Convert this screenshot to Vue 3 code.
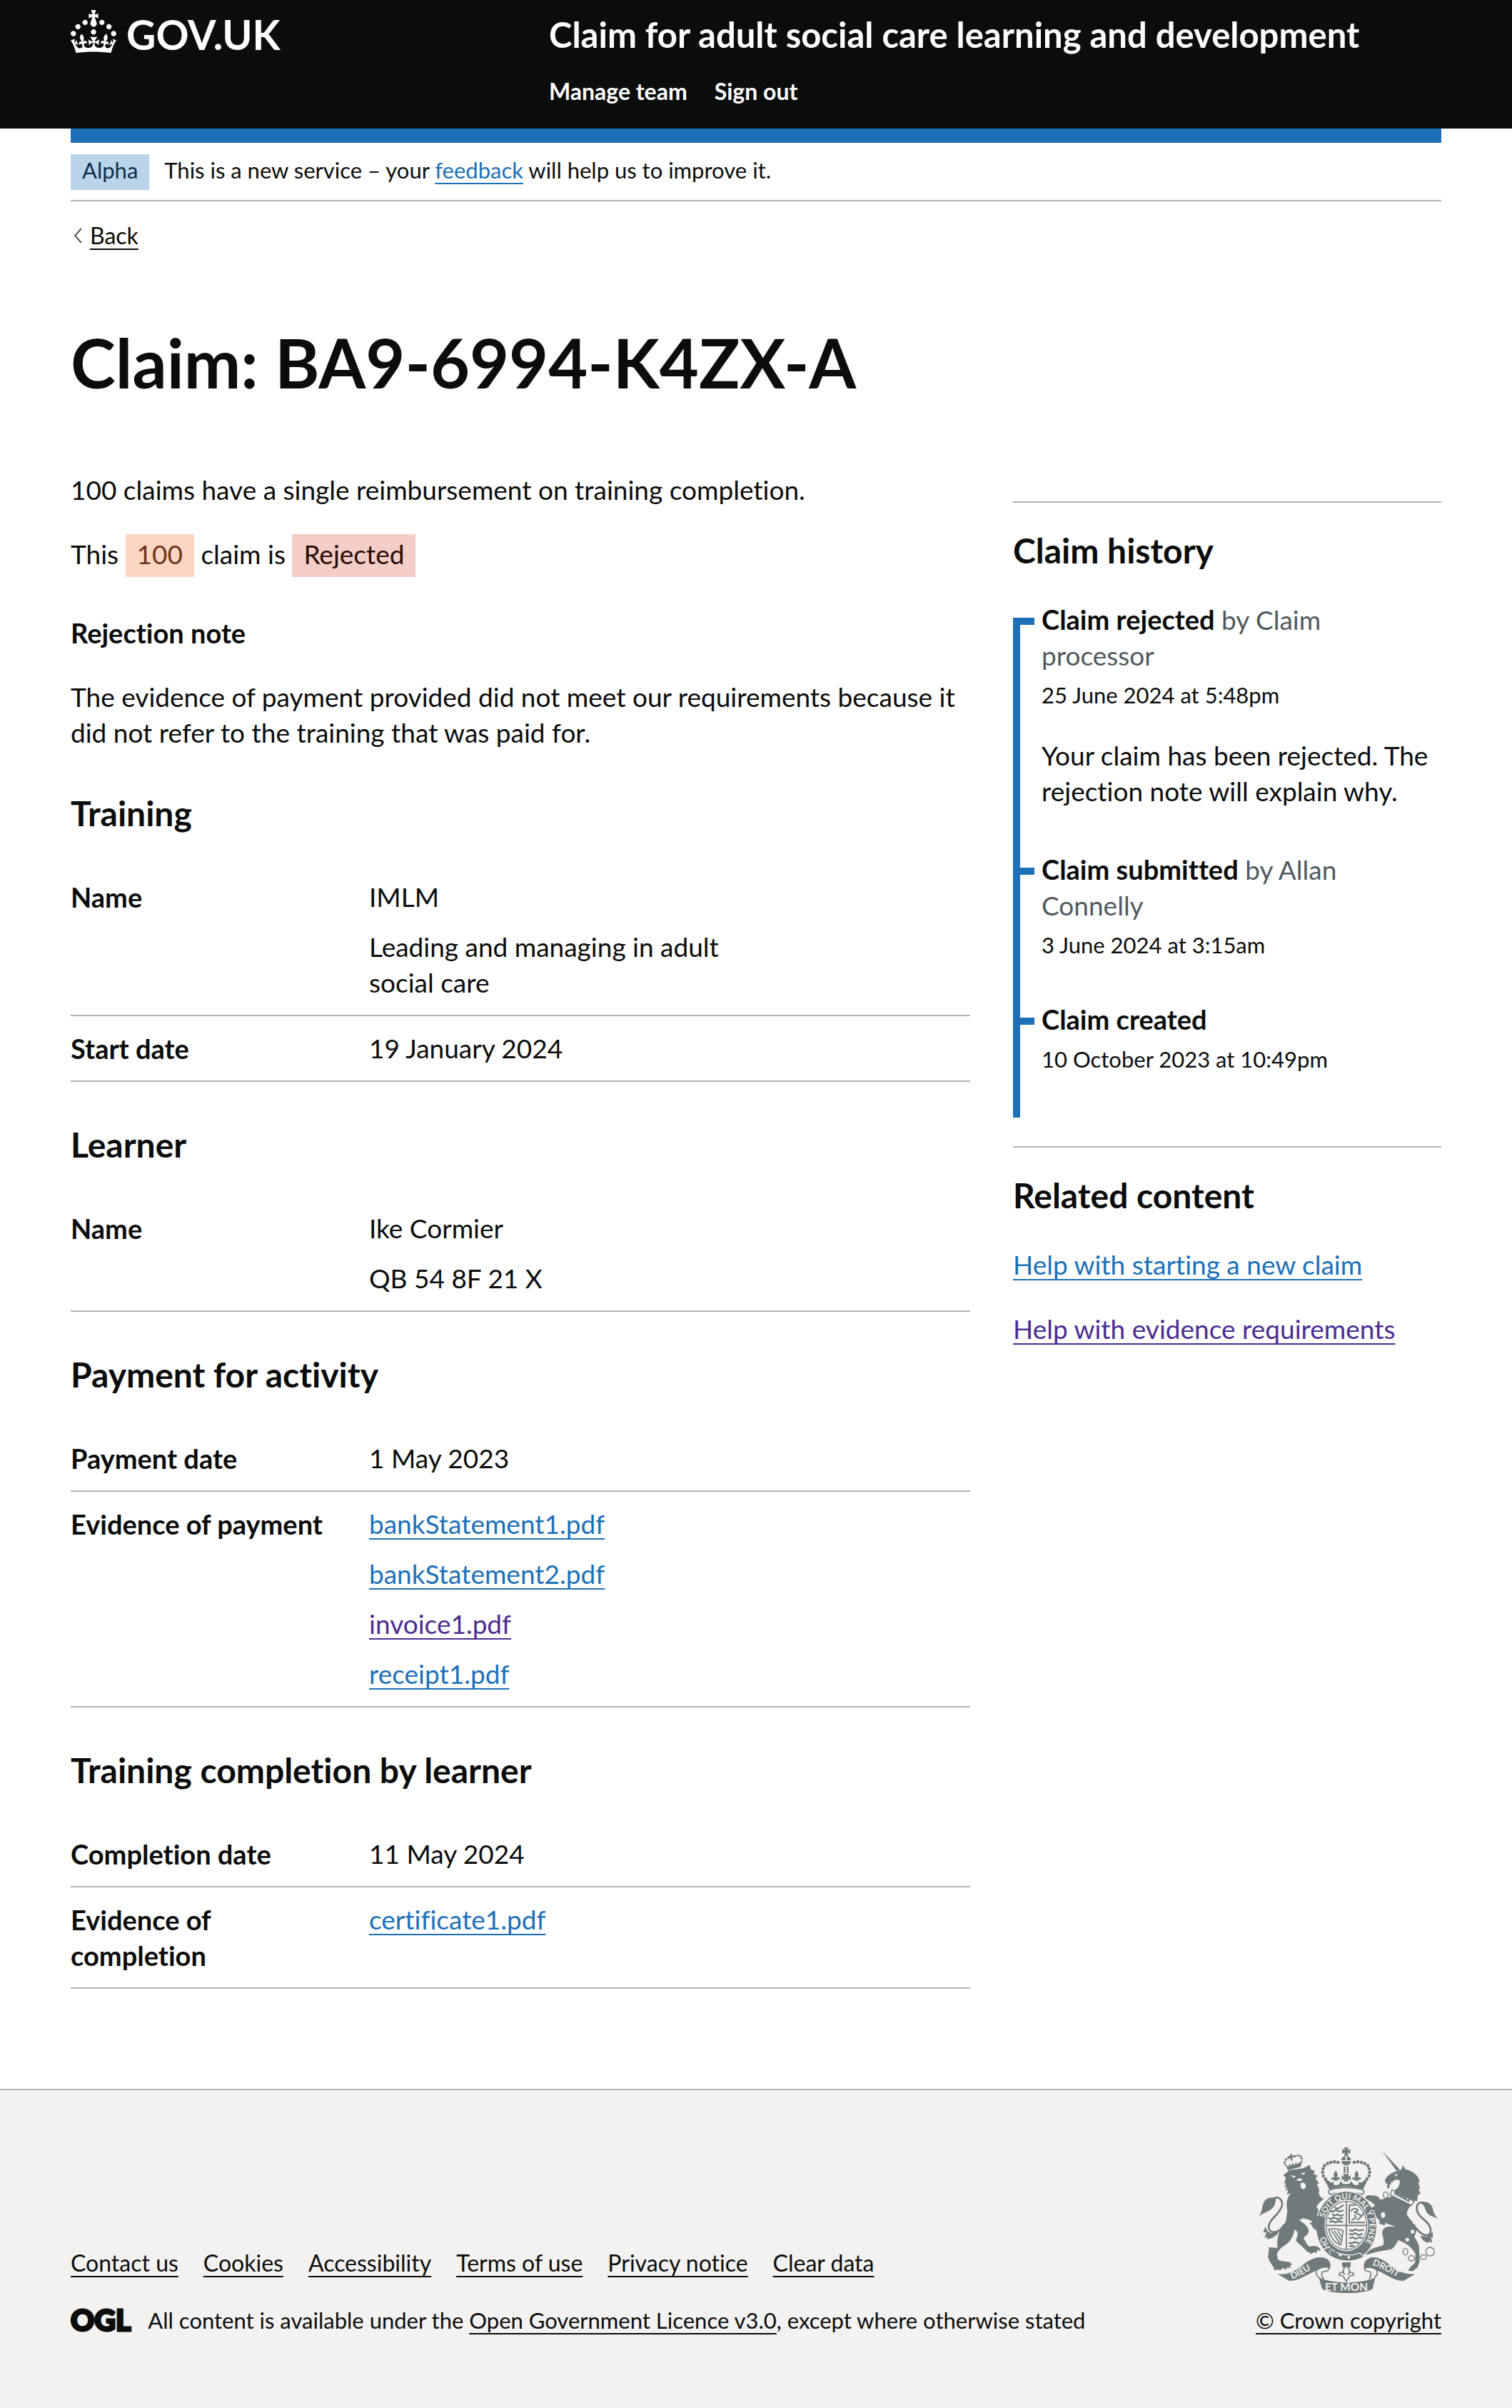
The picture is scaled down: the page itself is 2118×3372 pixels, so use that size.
<script setup>
const navLinks = ['Manage team', 'Sign out']

const sections = [
  {
    title: 'Training',
    rows: [
      { key: 'Name', values: ['IMLM', 'Leading and managing in adult social care'] },
      { key: 'Start date', values: ['19 January 2024'] },
    ],
  },
  {
    title: 'Learner',
    rows: [{ key: 'Name', values: ['Ike Cormier', 'QB 54 8F 21 X'] }],
  },
  {
    title: 'Payment for activity',
    rows: [
      { key: 'Payment date', values: ['1 May 2023'] },
      {
        key: 'Evidence of payment',
        files: [
          { name: 'bankStatement1.pdf' },
          { name: 'bankStatement2.pdf' },
          { name: 'invoice1.pdf', visited: true },
          { name: 'receipt1.pdf' },
        ],
      },
    ],
  },
  {
    title: 'Training completion by learner',
    rows: [
      { key: 'Completion date', values: ['11 May 2024'] },
      { key: 'Evidence of completion', files: [{ name: 'certificate1.pdf' }] },
    ],
  },
]

const history = [
  {
    title: 'Claim rejected',
    by: 'by Claim processor',
    date: '25 June 2024 at 5:48pm',
    text: 'Your claim has been rejected. The rejection note will explain why.',
  },
  { title: 'Claim submitted', by: 'by Allan Connelly', date: '3 June 2024 at 3:15am' },
  { title: 'Claim created', date: '10 October 2023 at 10:49pm' },
]

const footerLinks = ['Contact us', 'Cookies', 'Accessibility', 'Terms of use', 'Privacy notice', 'Clear data']

const beads = [[403, 147], [388, 145], [373, 147], [359, 152], [346, 161], [340, 174], [338, 189], [341, 204], [350, 217]]
const chain = [[603, 284, 10, 13], [592, 368, 12, 15], [686, 522, 10, 14], [711, 550, 13, 11], [762, 545, 12, 10], [790, 522, 18, 18]]
const chainOnBody = [[726, 394, 11, 13], [716, 438, 8, 8], [694, 472, 8, 8]]
</script>

<template>
  <div class="page">
    <header class="header">
      <div class="container header-inner">
        <a class="logo" href="#" aria-label="GOV.UK">
          <svg class="crown" viewBox="0 0 32 30" aria-hidden="true">
            <path fill="currentColor" d="M22.6 10.4c-1 .4-2-.1-2.4-1-.4-.9.1-2 1-2.4.9-.4 2 .1 2.4 1s-.1 2-1 2.4m-5.9 6.7c-.9.4-2-.1-2.4-1-.4-.9.1-2 1-2.4.9-.4 2 .1 2.4 1s-.1 2-1 2.4m10.8-3.7c-1 .4-2-.1-2.4-1-.4-.9.1-2 1-2.4.9-.4 2 .1 2.4 1s0 2-1 2.4m3.3 4.8c-1 .4-2-.1-2.4-1-.4-.9.1-2 1-2.4.9-.4 2 .1 2.4 1s-.1 2-1 2.4M17 4.7l2.3 1.2V2.5l-2.3.7-.2-.2.9-3h-3.4l.9 3-.2.2c-.1.1-2.3-.7-2.3-.7v3.4L15 4.7c.1.1.1.2.2.2l-1.3 4c-.1.2-.1.4-.1.6 0 1.1.8 2 1.9 2.2h.7c1-.2 1.9-1.1 1.9-2.1 0-.2 0-.4-.1-.6l-1.3-4c-.1-.2 0-.2.1-.3m-7.6 5.7c.9.4 2-.1 2.4-1 .4-.9-.1-2-1-2.4-.9-.4-2 .1-2.4 1s0 2 1 2.4m-5 3c.9.4 2-.1 2.4-1 .4-.9-.1-2-1-2.4-.9-.4-2 .1-2.4 1s.1 2 1 2.4m-3.2 4.8c.9.4 2-.1 2.4-1 .4-.9-.1-2-1-2.4-.9-.4-2 .1-2.4 1s0 2 1 2.4m14.8 11c4.4 0 8.6.3 12.3.8 1.1-4.5 2.4-7 3.7-8.8l-2.5-.9c.2 1.3.3 1.9 0 2.7-.4-.4-.8-1.1-1.1-2.3l-1.2 4c.7-.5 1.3-.8 2-.9-1.1 2.5-2.6 3.1-3.5 3-1.1-.2-1.7-1.2-1.5-2.1.3-1.2 1.5-1.5 2.1-.1 1.1-2.3-.8-3-2-2.3 1.9-1.9 2.1-3.5.6-5.6-2.1 1.6-2.1 3.2-1.2 5.5-1.2-1.4-3.2-.6-2.5 1.6.9-1.4 2.1-.5 1.9.8-.2 1.1-1.7 2.1-3.5 1.9-2.7-.2-2.9-2.1-2.9-3.6.7-.1 1.9.5 2.9 1.9l.4-4.3c-1.1 1.1-2.1 1.4-3.2 1.4.4-1.2 2.1-3 2.1-3h-5.4s1.7 1.9 2.1 3c-1.1 0-2.1-.2-3.2-1.4l.4 4.3c1-1.4 2.2-2 2.9-1.9-.1 1.5-.2 3.4-2.9 3.6-1.9.2-3.4-.8-3.5-1.9-.2-1.3 1-2.2 1.9-.8.7-2.3-1.2-3-2.5-1.6.9-2.2.9-3.9-1.2-5.5-1.5 2-1.3 3.7.6 5.6-1.2-.7-3.1 0-2 2.3.6-1.4 1.8-1.1 2.1.1.2.9-.3 1.9-1.5 2.1-.9.2-2.4-.5-3.5-3 .6 0 1.2.3 2 .9l-1.2-4c-.3 1.1-.7 1.9-1.1 2.3-.3-.8-.2-1.4 0-2.7l-2.9.9C1.3 23 2.6 25.5 3.7 30c3.7-.5 7.9-.8 12.3-.8" />
          </svg>
          <span class="logo-text">GOV.UK</span>
        </a>
        <div class="header-content">
          <a class="service-name" href="#">Claim for adult social care learning and development</a>
          <nav class="nav" aria-label="Menu">
            <a v-for="l in navLinks" :key="l" href="#">{{ l }}</a>
          </nav>
        </div>
      </div>
    </header>

    <div class="container">
      <div class="blue-bar"></div>
      <div class="phase-banner">
        <strong class="tag tag-blue">Alpha</strong>
        <span>This is a new service – your <a class="link" href="#">feedback</a> will help us to improve it.</span>
      </div>
      <a class="back" href="#">
        <svg class="chevron" viewBox="0 0 14 24" aria-hidden="true"><path d="M13 2 4 12l9 10" fill="none" stroke="#505a5f" stroke-width="2" /></svg>
        <span>Back</span>
      </a>

      <main>
        <h1>Claim: BA9-6994-K4ZX-A</h1>
        <div class="columns">
          <div class="main-col">
            <p>100 claims have a single reimbursement on training completion.</p>
            <p>This <span class="tag tag-orange">100</span> claim is <span class="tag tag-red">Rejected</span></p>
            <h3>Rejection note</h3>
            <p>The evidence of payment provided did not meet our requirements because it did not refer to the training that was paid for.</p>

            <section v-for="s in sections" :key="s.title" class="summary">
              <h2>{{ s.title }}</h2>
              <dl>
                <div v-for="r in s.rows" :key="r.key" class="row">
                  <dt>{{ r.key }}</dt>
                  <dd>
                    <span v-for="v in r.values" :key="v">{{ v }}</span>
                    <span v-for="f in r.files" :key="f.name"><a class="link" :class="{ visited: f.visited }" href="#">{{ f.name }}</a></span>
                  </dd>
                </div>
              </dl>
            </section>
          </div>

          <aside class="side-col">
            <section class="side-block">
              <h2>Claim history</h2>
              <ol class="timeline">
                <li v-for="h in history" :key="h.title">
                  <div class="event"><strong>{{ h.title }}</strong><span v-if="h.by" class="by">{{ ' ' + h.by }}</span></div>
                  <time class="date">{{ h.date }}</time>
                  <p v-if="h.text" class="event-text">{{ h.text }}</p>
                </li>
              </ol>
            </section>
            <section class="side-block related">
              <h2>Related content</h2>
              <ul>
                <li><a class="link" href="#">Help with starting a new claim</a></li>
                <li><a class="link visited" href="#">Help with evidence requirements</a></li>
              </ul>
            </section>
          </aside>
        </div>
      </main>
    </div>

    <footer class="footer">
      <div class="container footer-inner">
        <div>
          <nav class="footer-links" aria-label="Support links">
            <a v-for="l in footerLinks" :key="l" href="#">{{ l }}</a>
          </nav>
          <div class="licence">
            <span class="ogl">OGL</span>
            <span>All content is available under the <a href="#">Open Government Licence v3.0</a>, except where otherwise stated</span>
          </div>
        </div>
        <a class="copyright" href="#">
          <svg class="arms" viewBox="72 84 750 612" aria-hidden="true">
            <g fill="#707a7d" stroke="none">
              <!-- royal crown -->
              <path d="M428 84h18l-4 12 12-5v20l-12-5 4 13h-18l4-13-12 5V91l12 5z" />
              <path d="M417 138a20 19 0 0 1 17-18v18zM440 120a20 19 0 0 1 17 18h-17zM417 142h40a20 18 0 0 1-40 0z" />
              <g v-for="(b, i) in beads" :key="i">
                <circle :cx="b[0]" :cy="b[1]" r="7" />
                <circle :cx="874 - b[0]" :cy="b[1]" r="7" />
              </g>
              <path d="M427 164h7v28h-7zM440 164h7v28h-7z" />
              <path d="M393 182c10 12 10 20 4 30 8-6 16-2 14 8-4-4-8-2-12 4h-12c-4-6-8-8-12-4-2-10 6-14 14-8-6-10-6-18 4-30zM481 182c10 12 10 20 4 30 8-6 16-2 14 8-4-4-8-2-12 4h-12c-4-6-8-8-12-4-2-10 6-14 14-8-6-10-6-18 4-30zM424 196h26l-6 12 12-6v20l-12-5 4 10h-22l4-10-12 5v-20l12 6z" />
              <path d="M344 216l20 8c10 12 20 8 22 2l-2 14c6 4 18 4 24-2l6-12 10 12h26l10-12 6 12c6 6 18 6 24 2l-2-14c2 6 12 10 22-2l20-8-22 44c-40-14-104-14-142 0z" />
              <path fill="none" stroke="#707a7d" stroke-width="5" d="M368 262c40-12 100-12 140 0 6 8 4 14-2 20-38-12-98-12-136 0-8-6-8-12-2-20z" />
              <!-- lion crown -->
              <g>
                <circle cx="184" cy="135" r="5" /><circle cx="194" cy="128" r="5" /><circle cx="179" cy="147" r="5" />
                <circle cx="182" cy="158" r="4" /><circle cx="222" cy="121" r="5" /><circle cx="234" cy="118" r="5" />
                <circle cx="245" cy="121" r="5" /><circle cx="250" cy="131" r="5" /><circle cx="250" cy="143" r="4" />
                <path d="M200 114l10-2 0 8 7-2 1 9-8 0 2 12-8 1-1-12-7 1-1-8 7 0zM184 160l12 4 2-12 8 10 6-14 8 12 6-14 6 10 6-8 12-2-4 20-54 14z" />
              </g>
              <!-- lion -->
              <path d="M173 200l14-10 10-10 60-8 28-14 3 18 18 8-6 12 18 8-10 10 16 22-10 0 10 26-2 18 12 18 12-2-20 20-14 16 10 18 16 20 8 32 4 20-6 16-14 4 4-12-12 8-8-4 8-12-14 8-10-6 10-12-16-2-10-8 16-4-12-8-12-4-18-4-16 8c12 8 28 18 36 32 8 16 2 28-14 38l-4 8c12 10 10 24 24 32l18-2c16 0 30 10 30 20l-6 2-6-8-6 16-10-4-12 8-8-6-10-4c-10-16-32-30-46-46l8-28c-2-10-6-14-14-18-4 30-20 54-44 68-16 10-26 22-30 36l4 20c10 10 30 8 50 12l10 10-10 6 6 10-16-4-6 10-14-8-8 10-12-2-16 2c2-12-10-22-18-36l-8-20 4-26 0-14 38 2c-6-18 0-48 6-68 4-22 24-32 28-44l6-44c-6-22-4-52 14-74l-16 6 6-22-12 6 6-18-12 4 10-18-10 4 8-26z" />
              <path fill="none" stroke="#707a7d" stroke-width="8" d="M178 410c-26 40-64 36-66 12-4-36 50-56 56-96 2-26-18-36-34-28" />
              <path d="M142 296c-30-6-50 6-56 34-2 18-8 30-14 44 20-18 36-18 50-30 16-12 18-28 20-48zM98 416l-10 26 14-2-8 26 16-6-8 10c24-2 44-14 52-32l-30 6c-14-2-22-12-26-28z" />
              <!-- unicorn -->
              <path d="M588 99l74 77-12 8z" />
              <path d="M600 224c4-18 20-26 34-34l18-8 16-4 8-18 10 16c20 4 42 16 52 32l8 18-6 8 8 22-6 6 8 16-12 6-2 26c-10-6-12 2-16 10l-40-28-42-26c16-8 26-22 24-44l-18-2-14 10-8 2 6 8-10 0 2 12-8 6-4-12 4-8-8-2z" />
              <path d="M630 262l92 48-10 18-90-44z" fill="#f3f2f1" stroke="#707a7d" stroke-width="4" />
              <path d="M638 280l4-12 8 8 8-6 4 14 12-6 4 16 10-6 4 16 12-4-2 14z" />
              <path d="M616 294l16-6 80 38c-14 14-20 26-20 40 8 16 24 30 36 46 10 20 0 34-4 48 8 16 18 28 20 44l2 56c-2 12-6 20-10 30l-20 14-18-2c4-12 18-24 28-32l2-40c-12-20-28-36-52-48l-20-8c-10 16-16 32-30 38l-66 12-40 12c4-14 20-24 36-30l36-10c4-8 4-26-2-42-6-24 8-36 28-38l26 2c-14-10-64-18-78-38-2-8-16-20-26-32l-16-4 4-10 22 2 8-8c-12-18-34-20-42-34 10-14 30-10 40-2l10 16z" />
              <path fill="none" stroke="#707a7d" stroke-width="8" d="M726 418c36 48 70 42 66 10-6-40-60-46-58-92 2-20 20-26 36-16" />
              <path d="M748 316c32-8 50 6 54 30 2 14 8 22 20 38-18-10-34-10-46-26-8-12-4-26-28-42zM800 436l2 28-8-4 4 26-14-8 0 8c-18-4-32-16-34-30l26 2c12-2 20-12 24-22z" />
            </g>
            <!-- garter -->
            <ellipse cx="438" cy="416" rx="128" ry="147" fill="#707a7d" stroke="#f3f2f1" stroke-width="4" />
            <ellipse cx="438" cy="412" rx="92" ry="108" fill="#f3f2f1" />
            <ellipse cx="438" cy="412" rx="86" ry="101" fill="none" stroke="#707a7d" stroke-width="4" />
            <path d="M352 412h172M438 311v204" stroke="#707a7d" stroke-width="5" />
            <g fill="none" stroke="#707a7d" stroke-width="7">
              <path d="M388 336l12 6 12-6 14-10M370 352l14 2 10-8 14 8 18-6M378 364l8 6 16-4 10 6 14-4M362 380l12 6 10-8 18 8 22-6M366 398l14-4 12 6 16-6 16 4" />
              <path d="M450 326h28M450 326v74h66M456 352c12-16 30-12 30 0l-14 4c10 10 24 6 28 18l12-14M460 390l18-10-4-14M484 390l14-14" stroke-width="6" />
              <path d="M364 428c24-4 44-2 60 6-4 22-4 42-10 60-22-8-44-30-50-66zM376 434l34 52M388 434l26 40M402 434l16 26" stroke-width="5" />
              <path d="M450 430l12 6 12-8 18 6 20-4M448 448l16 2 10-6 14 8 18-4M450 466l14-4 12 6 18-6 12 4M448 484l12 4 12-6 20 4M450 500l12-2 10 2" />
            </g>
            <path id="garter-left" d="M370 510L340 438" fill="none" />
            <path id="garter-top" d="M345 384A97 114 0 1 1 492 510" fill="none" />
            <g class="motto" font-size="34">
              <text><textPath href="#garter-left" startOffset="4">HO</textPath></text>
              <text><textPath href="#garter-top" startOffset="4">SOIT QUI MAL Y PENSE</textPath></text>
            </g>
            <path d="M292 338l34 50 16 46-18 8-30-24z" fill="#707a7d" />
            <path d="M366 504c30 30 80 42 128 24l20 14c-40 28-104 24-144-2z" fill="#707a7d" stroke="#f3f2f1" stroke-width="4" />
            <circle cx="378" cy="522" r="15" fill="none" stroke="#707a7d" stroke-width="6" />
            <circle cx="412" cy="536" r="6" fill="#f3f2f1" /><circle cx="448" cy="546" r="6" fill="#f3f2f1" />
            <!-- unicorn forelegs over the garter -->
            <path d="M534 296c10-14 30-10 40-2l12 16 20-6-10 40-42 4-10-4 4-10 16 2 6-8c-10-16-30-18-36-32z" fill="#707a7d" />
            <path fill="none" stroke="#707a7d" stroke-width="11" d="M560 344c4 22 10 36 30 50" />
            <path d="M578 388l24 8-2 16-24-8z" fill="#707a7d" />
            <g fill="none" stroke="#707a7d" stroke-width="4">
              <ellipse v-for="(c, i) in chain" :key="i" :cx="c[0]" :cy="c[1]" :rx="c[2]" :ry="c[3]" />
            </g>
            <g fill="#f3f2f1">
              <ellipse cx="592" cy="368" rx="9" ry="12" />
              <ellipse v-for="(c, i) in chainOnBody" :key="i" :cx="c[0]" :cy="c[1]" :rx="c[2]" :ry="c[3]" />
              <path d="M204 200l22 6-10 6zM246 194l20-6-8 12zM226 222l14-8 14 4-8 8zM246 234c14-8 26 6 20 20-8 10-18 4-20-6zM640 198l14-2-6 10z" />
            </g>
            <!-- scroll -->
            <g fill="#707a7d">
              <path d="M420 567h36v20h-36z" />
              <path d="M148 616c40 6 80-14 108-38 30-26 70-42 102-24 14 10 16 26 10 40-18-10-40 0-52 6-40 14-70 44-118 45z" />
              <path d="M728 616c-40 4-80-14-108-38-30-26-66-42-94-24-14 10-18 26-12 40 18-8 36-2 50 6 40 14 66 44 114 45z" />
              <path d="M322 630c60 30 180 28 238 0l-12 48c-30 24-180 24-212 0z" />
            </g>
            <g fill="none" stroke="#707a7d" stroke-width="5">
              <path d="M316 596c-12 20-2 30 10 38M366 592c-4 12-14 14-24 14s-12 22 2 30M564 598c10 18-2 28-8 32M512 592c6 12 14 14 22 14s12 22-2 30" />
              <path d="M438 580c14 12 16 26 8 40 4-16 24-16 22 2-8-6-12 2-18 6l-6 10-6 8-6-8-6-10c-6-4-10-12-18-6-2-18 18-18 22-2-8-14-6-28 8-40z" />
            </g>
            <path id="scroll-left" d="M210 638Q262 618 318 578" fill="none" />
            <path id="scroll-right" d="M546 578Q610 602 684 650" fill="none" />
            <g class="motto" font-size="38">
              <text><textPath href="#scroll-left">DIEU</textPath></text>
              <text><textPath href="#scroll-right">DROIT</textPath></text>
              <text x="438" y="686" font-size="46" text-anchor="middle">ET MON</text>
            </g>
          </svg>
          <span>© Crown copyright</span>
        </a>
      </div>
    </footer>
  </div>
</template>

<style>
body {
  margin: 0;
  background: #f3f2f1;
}
</style>

<style scoped>
.page {
  background: #fff;
  color: #0b0c0c;
  font-family: Lato, "Noto Sans", sans-serif;
  font-size: 37px;
  line-height: 50px;
  font-variant-ligatures: none;
}
.container {
  margin: 0 auto;
  max-width: 1920px;
  width: calc(100% - 120px);
}
h1, h2, h3, p, dl, dd, ol, ul {
  margin: 0;
  padding: 0;
}
ol, ul {
  list-style: none;
}
a {
  color: inherit;
  text-decoration-thickness: 2px;
  text-underline-offset: 6px;
  text-decoration-skip-ink: none;
}
.link {
  color: #1d70b8;
}
.visited {
  color: #4c2c92;
}
.header {
  background: #0b0c0c;
  color: #fff;
}
.header-inner {
  display: flex;
  padding: 14px 0 32px;
}
.header a {
  text-decoration: none;
}
.logo {
  display: flex;
  align-items: flex-start;
  gap: 14px;
  flex: 0 0 670px;
}
.crown {
  width: 64px;
  height: 60px;
}
.logo-text {
  padding-top: 4px;
  font-size: 57px;
  line-height: 60px;
  font-weight: 700;
}
.header-content {
  display: flex;
  flex-direction: column;
  gap: 30px;
  padding-top: 4px;
}
.service-name {
  font-size: 49px;
  line-height: 60px;
  font-weight: 700;
}
.nav {
  display: flex;
  gap: 38px;
  font-size: 32px;
  line-height: 40px;
  font-weight: 700;
}
.blue-bar {
  height: 20px;
  background: #1d70b8;
}
.phase-banner {
  display: flex;
  align-items: baseline;
  gap: 21px;
  padding: 16px 0 14px;
  border-bottom: 2px solid #b1b4b6;
  font-size: 31px;
  line-height: 40px;
}
.tag {
  font-weight: 400;
}
.tag-blue {
  padding: 2px 16px 8px;
  background: #bbd4ea;
  color: #0c2d4a;
}
.tag-orange,
.tag-red {
  display: inline-block;
  margin: -3px 0 -7px;
  padding: 3px 16px 7px;
}
.tag-orange {
  background: #fcd6c3;
  color: #6e3619;
}
.tag-red {
  background: #f4cdc6;
  color: #2a0b06;
}
.back {
  display: flex;
  align-items: center;
  gap: 11px;
  width: fit-content;
  margin-top: 28px;
  font-size: 32px;
  line-height: 40px;
}
.chevron {
  width: 14px;
  height: 24px;
  margin-left: 2px;
}
h1 {
  margin: 107px 0 104px;
  font-size: 95px;
  line-height: 100px;
}
h2 {
  font-size: 48px;
  line-height: 60px;
}
h3 {
  margin: 60px 0 40px;
  font-size: 38px;
  line-height: 50px;
}
.columns {
  display: grid;
  grid-template-columns: 21fr 10fr;
  gap: 60px;
}
.main-col > p + p {
  margin-top: 40px;
}
.summary h2 {
  margin: 58px 0 42px;
}
.row {
  display: grid;
  grid-template-columns: 418fr 560fr 282fr;
  padding: 20px 0;
  border-bottom: 2px solid #b1b4b6;
}
dt {
  padding-right: 30px;
  font-size: 38px;
  font-weight: 700;
}
dd {
  display: flex;
  flex-direction: column;
  gap: 20px;
}
.side-col {
  padding-top: 41px;
}
.side-block {
  border-top: 2px solid #b1b4b6;
  padding-top: 37px;
}
.side-block h2 {
  margin-bottom: 42px;
}
.timeline {
  position: relative;
  display: flex;
  flex-direction: column;
  gap: 60px;
  padding: 0 0 62px 40px;
}
.timeline::before {
  content: "";
  position: absolute;
  left: 0;
  top: 22px;
  bottom: 0;
  width: 10px;
  background: #1d70b8;
}
.timeline li {
  position: relative;
}
.timeline li::before {
  content: "";
  position: absolute;
  left: -40px;
  top: 22px;
  width: 30px;
  height: 10px;
  background: #1d70b8;
}
.event {
  padding-right: 60px;
}
.event strong {
  font-size: 38px;
  line-height: 48px;
}
.by {
  color: #505a5f;
}
.date {
  display: block;
  margin-top: 10px;
  font-size: 31px;
  line-height: 40px;
}
.event-text {
  margin-top: 40px;
}
.related {
  margin-top: 40px;
}
.related ul {
  display: flex;
  flex-direction: column;
  gap: 40px;
}
.footer {
  margin-top: 140px;
  border-top: 2px solid #b1b4b6;
  background: #f3f2f1;
  font-size: 31px;
  line-height: 40px;
}
.footer-inner {
  display: flex;
  justify-content: space-between;
  align-items: flex-end;
  padding: 80px 0 102px;
}
.footer-links {
  display: flex;
  gap: 35px;
  margin-bottom: 40px;
  font-size: 32px;
}
.licence {
  display: flex;
  align-items: center;
  gap: 24px;
}
.ogl {
  font-size: 41px;
  font-weight: 900;
  -webkit-text-stroke: 3px currentColor;
}
.copyright {
  display: flex;
  flex-direction: column;
  align-items: center;
  gap: 18px;
}
.arms {
  width: 250px;
  height: 204px;
}
.motto {
  fill: #f3f2f1;
  font-family: Lato, sans-serif;
  font-weight: 700;
}
</style>
